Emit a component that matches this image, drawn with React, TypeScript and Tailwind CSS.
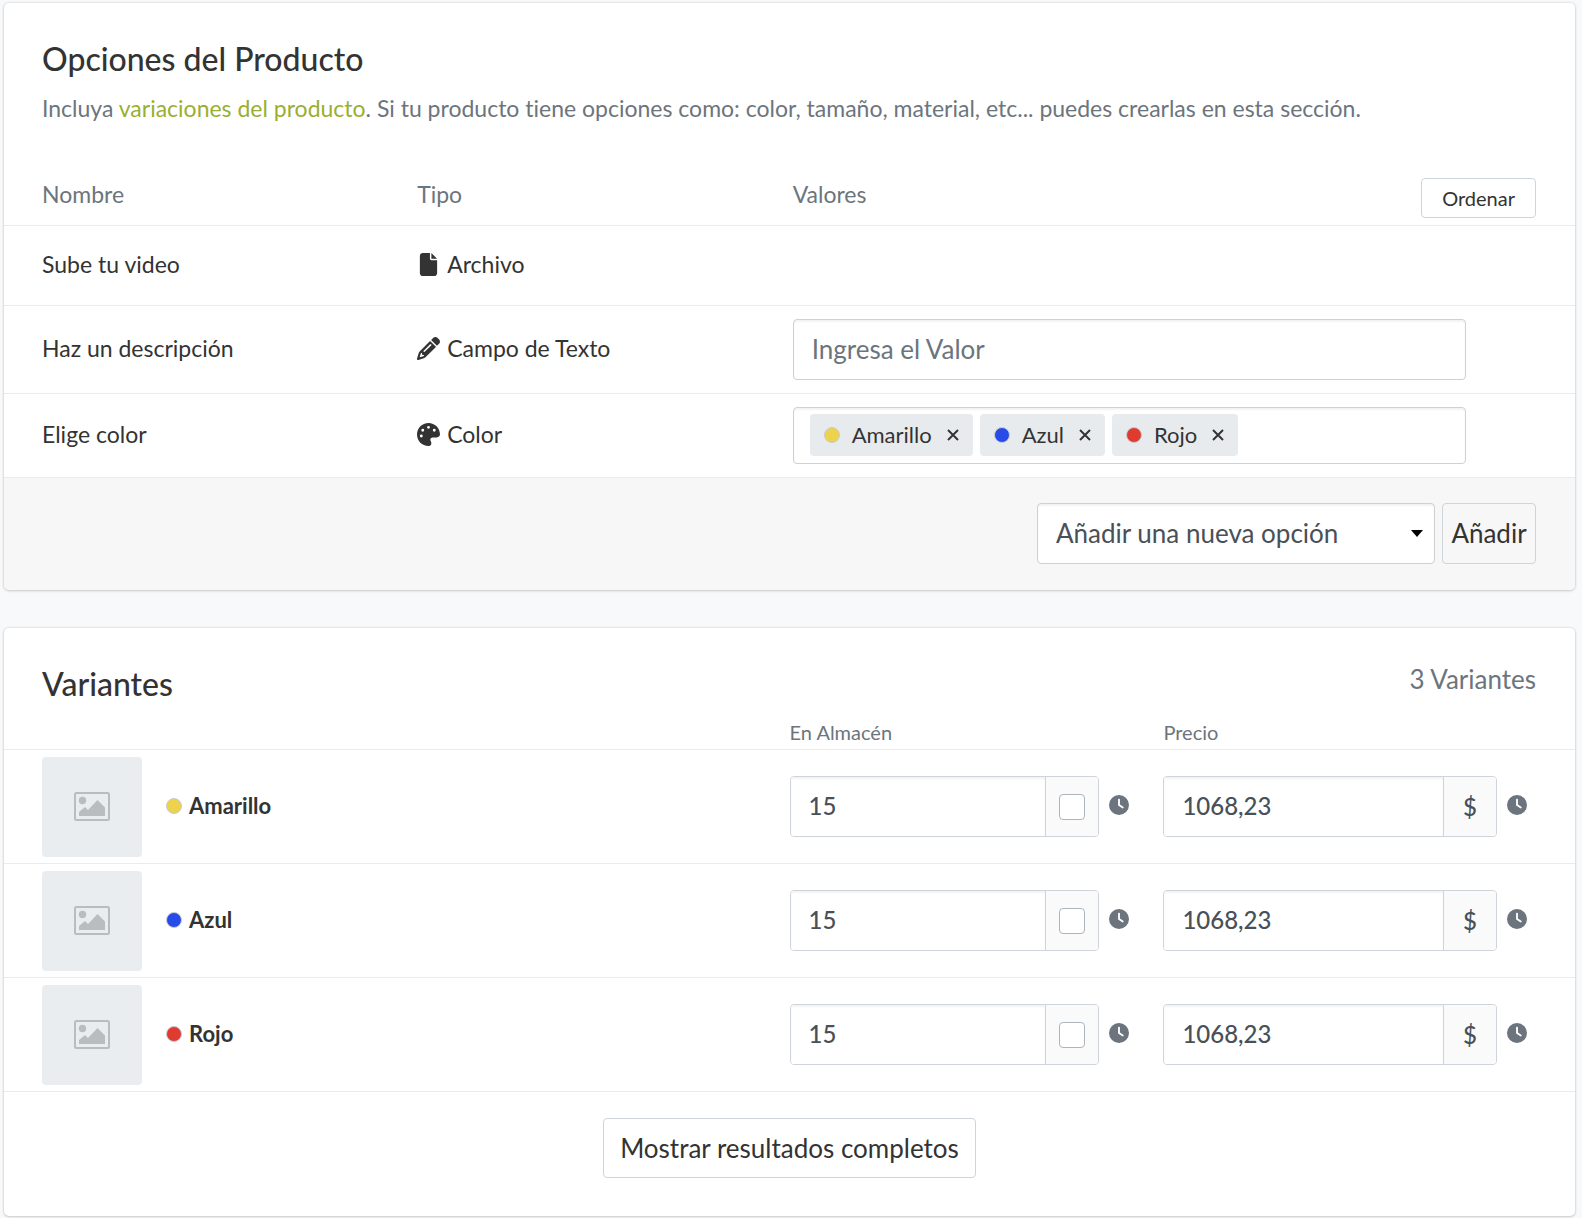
import { useState } from 'react';
import type { ReactNode } from 'react';
import { FaClock, FaFile, FaPalette, FaPencil } from 'react-icons/fa6';

const colors = [
  { name: 'Amarillo', dot: 'bg-[#edd24c]' },
  { name: 'Azul', dot: 'bg-[#264be8]' },
  { name: 'Rojo', dot: 'bg-[#e03b31]' },
];

const Card = ({ children }: { children: ReactNode }) => (
  <section className="overflow-hidden rounded-[5px] bg-white shadow-[0_0_2px_1px_rgba(0,0,0,0.07),0_1px_3px_rgba(0,0,0,0.14)]">
    {children}
  </section>
);

const Dot = ({ color }: { color: string }) => (
  <span className={`h-4 w-4 shrink-0 rounded-full border border-[#c9cbcd] ${color}`} />
);

const ImagePlaceholder = () => (
  <div className="flex h-[100px] w-[100px] items-center justify-center rounded-[4px] bg-[#e9edf0] text-[#b9bdc0]">
    <svg width="36" height="29" viewBox="0 0 36 29" fill="none" aria-hidden="true">
      <rect x="1" y="1" width="34" height="27" rx="1.5" stroke="currentColor" strokeWidth="2" />
      <circle cx="8.5" cy="8.5" r="3.7" fill="currentColor" />
      <path d="M5 24v-4l6-5 3 3 9.500-10L31 15.500V24Z" fill="currentColor" />
    </svg>
  </div>
);

const Chip = ({ name, color, onRemove }: { name: string; color: string; onRemove: () => void }) => (
  <span className="flex h-[42px] items-center rounded-[4px] bg-[#e8ebee] px-[14px] text-[22px]">
    <Dot color={color} />
    <span className="ml-3">{name}</span>
    <button type="button" aria-label={`Quitar ${name}`} onClick={onRemove} className="ml-[15px]">
      <svg width="12" height="12" viewBox="0 0 12 12" stroke="currentColor" strokeWidth="2" aria-hidden="true">
        <path d="M1 1l10 10M11 1L1 11" />
      </svg>
    </button>
  </span>
);

const ProductOptions = () => {
  const [selected, setSelected] = useState(colors);

  return (
    <Card>
      <div className="px-[38px] pt-[35px]">
        <h2 className="text-[32px] leading-[42px] font-medium">Opciones del Producto</h2>
        <p className="mt-3 text-[23px] leading-8 text-[#6c757d]">
          Incluya <a href="#variaciones" className="text-[#9aaf31]">variaciones del producto</a>. Si tu producto tiene
          opciones como: color, tamaño, material, etc... puedes crearlas en esta sección.
        </p>
      </div>

      <table className="mt-[54px] w-full table-fixed text-left text-[23px] leading-8">
        <thead>
          <tr className="h-[47px] border-b border-[#e9ebec] align-top text-[#6c757d]">
            <th className="w-[26.3%] pl-[38px] font-normal">Nombre</th>
            <th className="w-[23.9%] font-normal">Tipo</th>
            <th className="pr-[39px] font-normal">
              <div className="flex items-start justify-between">
                Valores
                <button
                  type="button"
                  className="h-10 rounded-[4px] border border-[#ced4da] px-5 text-[20px] text-[#333]"
                >
                  Ordenar
                </button>
              </div>
            </th>
          </tr>
        </thead>
        <tbody>
          <tr className="h-20 border-b border-[#e9ebec]">
            <td className="pb-[2px] pl-[38px]">Sube tu video</td>
            <td className="pb-[2px]">
              <div className="flex items-center gap-[7px]">
                <span className="flex w-[23px] justify-center"><FaFile size={23} /></span>
                Archivo
              </div>
            </td>
            <td />
          </tr>
          <tr className="h-[88px] border-b border-[#e9ebec]">
            <td className="pb-[2px] pl-[38px]"><label htmlFor="descripcion">Haz un descripción</label></td>
            <td className="pb-[2px]">
              <div className="flex items-center gap-[7px]">
                <FaPencil size={23} />
                Campo de Texto
              </div>
            </td>
            <td className="pr-[109px]">
              <input
                id="descripcion"
                type="text"
                placeholder="Ingresa el Valor"
                className="block h-[61px] w-full rounded-[4px] border border-[#ced0d3] px-[18px] text-[26px] shadow-[inset_0_2px_2px_rgba(0,0,0,0.05)] placeholder:text-[#6c757d]"
              />
            </td>
          </tr>
          <tr className="h-[84px] border-b border-[#e9ebec]">
            <td className="pb-[2px] pl-[38px]">Elige color</td>
            <td className="pb-[2px]">
              <div className="flex items-center gap-[7px]">
                <FaPalette size={23} />
                Color
              </div>
            </td>
            <td className="pr-[109px]">
              <div className="flex h-[57px] items-center gap-[7px] rounded-[4px] border border-[#ced0d3] px-4 shadow-[inset_0_2px_2px_rgba(0,0,0,0.05)]">
                {selected.map((c) => (
                  <Chip
                    key={c.name}
                    name={c.name}
                    color={c.dot}
                    onRemove={() => setSelected(selected.filter((s) => s.name !== c.name))}
                  />
                ))}
              </div>
            </td>
          </tr>
        </tbody>
      </table>

      <div className="flex justify-end gap-[7px] bg-[#f7f7f7] pt-[25px] pr-[39px] pb-[26px] text-[26px]">
        <div className="relative">
          <select
            aria-label="Añadir una nueva opción"
            className="block h-[61px] w-[398px] appearance-none rounded-[4px] border border-[#ced0d3] bg-white px-[18px] text-[#495057] shadow-[inset_0_2px_2px_rgba(0,0,0,0.05)]"
          >
            <option>Añadir una nueva opción</option>
          </select>
          <svg
            width="12"
            height="7"
            viewBox="0 0 12 7"
            className="pointer-events-none absolute top-[27px] right-3 text-black"
            aria-hidden="true"
          >
            <path d="M0 0h12L6 7Z" fill="currentColor" />
          </svg>
        </div>
        <button type="button" className="h-[61px] w-[94px] rounded-[4px] border border-[#ced4da]">
          Añadir
        </button>
      </div>
    </Card>
  );
};

const fieldGroup =
  'flex h-[61px] min-w-0 flex-1 overflow-hidden rounded-[4px] border border-[#ced4da] text-[24px] font-medium text-[#495057]';
const fieldInput = 'min-w-0 flex-1 bg-white px-[18px] pb-[2px] shadow-[inset_0_2px_2px_rgba(0,0,0,0.05)]';
const fieldAddon = 'flex w-[53px] items-center justify-center border-l border-[#ced4da] bg-[#fafafa]';

const Variants = () => (
  <Card>
    <div className="flex items-start justify-between pt-[35px] pr-[39px] pl-[38px]">
      <h2 className="text-[32px] leading-[42px] font-medium">Variantes</h2>
      <span className="text-[26px] leading-8 text-[#6c757d]">3 Variantes</span>
    </div>

    <table className="mt-3 w-full table-fixed text-left">
      <thead>
        <tr className="h-[33px] border-b border-[#e9ebec] align-top text-[20px] leading-7 text-[#6c757d]">
          <th className="w-[50%]" aria-label="Variante" />
          <th className="w-[23.8%] pt-[1px] font-normal">En Almacén</th>
          <th className="pt-[1px] font-normal">Precio</th>
        </tr>
      </thead>
      <tbody>
        {colors.map((c) => (
          <tr key={c.name} className="h-[114px] border-b border-[#e9ebec]">
            <td className="pl-[38px]">
              <div className="flex items-center">
                <ImagePlaceholder />
                <div className="ml-6 flex items-center gap-[7px] pb-[2px] text-[22px] font-bold">
                  <Dot color={c.dot} />
                  {c.name}
                </div>
              </div>
            </td>
            <td className="pr-[34px]">
              <div className="flex items-center gap-[10px]">
                <div className={fieldGroup}>
                  <input aria-label={`En almacén ${c.name}`} defaultValue="15" className={fieldInput} />
                  <span className={fieldAddon}>
                    <input
                      type="checkbox"
                      aria-label={`Inventario ilimitado ${c.name}`}
                      className="h-[26px] w-[26px] appearance-none rounded-[4px] border border-[#adb5bd] bg-white checked:bg-[#9aaf31]"
                    />
                  </span>
                </div>
                <FaClock size={20} className="mb-1 shrink-0 text-[#6c757d]" />
              </div>
            </td>
            <td className="pr-[48px]">
              <div className="flex items-center gap-[10px]">
                <div className={fieldGroup}>
                  <input aria-label={`Precio ${c.name}`} defaultValue="1068,23" className={fieldInput} />
                  <span className={fieldAddon}>$</span>
                </div>
                <FaClock size={20} className="mb-1 shrink-0 text-[#6c757d]" />
              </div>
            </td>
          </tr>
        ))}
      </tbody>
    </table>

    <div className="flex justify-center pt-[26px] pb-[38px]">
      <button type="button" className="h-[60px] rounded-[4px] border border-[#ced4da] px-4 text-[26px]">
        Mostrar resultados completos
      </button>
    </div>
  </Card>
);

const App = () => (
  <main className="flex min-h-screen flex-col gap-[38px] bg-[#f8f9fb] pt-[3px] pr-[7px] pb-[2px] pl-1 font-['Lato',sans-serif] text-[#333] [font-variant-ligatures:none]">
    <ProductOptions />
    <Variants />
  </main>
);

export default App;
